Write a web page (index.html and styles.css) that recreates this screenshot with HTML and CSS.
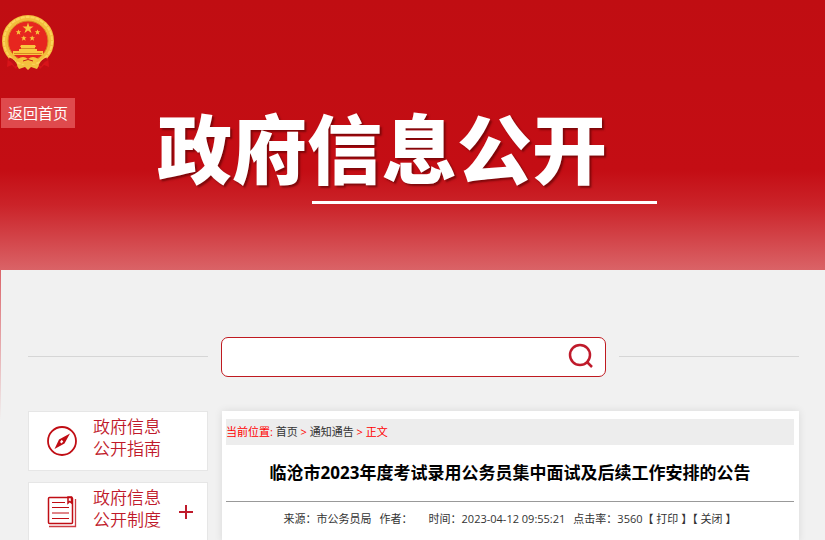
FILE: index.html
```html
<!DOCTYPE html>
<html lang="zh-CN">
<head>
  <meta charset="UTF-8">
  <meta name="viewport" content="width=device-width, initial-scale=1.0">
  <title>政府信息公开</title>
  <link rel="stylesheet" href="styles.css">
</head>
<body>

  <header class="banner">
    <svg class="emblem" viewBox="0 0 54 58" aria-hidden="true">
      <path d="M7 42 L6 53 L11 51 L15 55 L20 47 L34 47 L39 55 L43 51 L48 53 L47 42Z" fill="#d8141a"/>
      <circle cx="27" cy="27" r="23" fill="#e7261f" stroke="#f3bd3c" stroke-width="6"/>
      <circle cx="27" cy="27" r="24" fill="none" stroke="#fbd45c" stroke-width="2" stroke-dasharray="4 1"/>
      <circle cx="27" cy="27" r="20" fill="none" stroke="#dc8d25" stroke-width="1"/>
      <g fill="#f9c63f">
        <path d="M27 8.500 L28.300 12.500 L32.500 12.500 L29.200 15 L30.500 19 L27 16.600 L23.500 19 L24.800 15 L21.500 12.500 L25.700 12.500Z"/>
        <path d="M17.500 15.500l.8 1.800h2l-1.600 1.300.6 2.100-1.800-1.200-1.800 1.200.6-2.100-1.600-1.300h2z"/>
        <path d="M36.500 15.500l.8 1.800h2l-1.600 1.300.6 2.100-1.800-1.200-1.800 1.200.6-2.100-1.600-1.300h2z"/>
        <path d="M22.800 21.500l.8 1.800h2l-1.600 1.300.6 2.100-1.800-1.200-1.800 1.200.6-2.100-1.600-1.300h2z"/>
        <path d="M31.200 21.500l.8 1.800h2l-1.600 1.300.6 2.100-1.800-1.200-1.800 1.200.6-2.100-1.600-1.300h2z"/>
        <path d="M20 31h14l1 2h-1v2h2v2h6v4H12v-4h6v-2h2v-2h-1z"/>
      </g>
      <path d="M13 39.500h28M20 34.500h14" stroke="#d98724" stroke-width="1"/>
      <path d="M17 45 Q22 41 27 45 Q32 41 37 45 L34 50 Q27 47 20 50Z" fill="#f6c23c"/>
      <path d="M22 47 Q27 44 32 47" fill="none" stroke="#c42018" stroke-width="1"/>
      <path d="M15 50 L22 51 Q27 47 32 51 L39 50 L36 55 L30 53 L27 56 L24 53 L18 55Z" fill="#f2c140"/>
      <path d="M8 45 Q13 47 15 52 M46 45 Q41 47 39 52" fill="none" stroke="#c01015" stroke-width="3"/>
    </svg>
    <a class="back-home" href="#">返回首页</a>
    <h1 class="banner-title">政府信息公开</h1>
    <div class="banner-line"></div>
  </header>

  <div class="page">
    <form class="search">
      <span class="search-rule"></span>
      <div class="search-box">
        <input class="search-input" type="text" aria-label="搜索">
        <button class="search-button" type="button" aria-label="搜索">
          <svg viewBox="0 0 26 26" width="26" height="26" fill="none" stroke="#bf1a2b">
            <circle cx="12" cy="12" r="10" stroke-width="2.500"/>
            <path d="M18.500 18.500L24 24" stroke-width="2.500"/>
          </svg>
        </button>
      </div>
      <span class="search-rule"></span>
    </form>

    <div class="columns">
      <nav class="sidebar">
        <a class="side-link" href="#">
          <svg class="side-icon" viewBox="0 0 30 30">
            <circle cx="15" cy="15" r="14" fill="none" stroke="#c00d14" stroke-width="1.800"/>
            <path fill-rule="evenodd" fill="#c00d14" d="M23 7.500 L17.500 17.500 L7.500 23 L12 13.500Z M14.700 13.800 L13 16 L14.500 17.500 L16.300 15.500Z"/>
          </svg>
          <span class="side-text">政府信息<br>公开指南</span>
        </a>
        <a class="side-link" href="#">
          <svg class="side-icon" viewBox="0 0 30 34" fill="none" stroke="#c00d14">
            <rect x="1.500" y="2.500" width="24" height="26" rx="1" stroke-width="1.500"/>
            <path d="M28.500 4V31.500H2" stroke-width="1.300" opacity=".8"/>
            <path d="M5 7.500H18M5 12.500H22M5 18H22M5 23.500H22" stroke-width="1"/>
            <path d="M21 2H24.500V8L22.700 6.500L21 8Z" stroke-width="1.500"/>
          </svg>
          <span class="side-text">政府信息<br>公开制度</span>
          <svg class="side-plus" viewBox="0 0 14 14" stroke="#bf1a2b" stroke-width="2">
            <path d="M0 7H14M7 0V14"/>
          </svg>
        </a>
      </nav>

      <main class="article">
        <div class="crumbs">当前位置: <a href="#">首页</a> &gt; <a href="#">通知通告</a> &gt; 正文</div>
        <h2 class="article-title">临沧市2023年度考试录用公务员集中面试及后续工作安排的公告</h2>
        <div class="meta">
          <span>来源：市公务员局</span>
          <span class="author">作者：</span>
          <span>时间：2023-04-12 09:55:21</span>
          <span>点击率：3560【 <a href="#">打印</a> 】【 <a href="#">关闭</a> 】</span>
        </div>
      </main>
    </div>
  </div>

</body>
</html>
```
FILE: styles.css
```css
* {
  box-sizing: border-box;
}
body {
  margin: 0;
  padding-left: 1px;
  font-family: "Open Sans", "Noto Sans CJK SC", sans-serif;
  font-size: 11px;
  color: #333;
  background: linear-gradient(#c00d12 0, #c40d14 170px, #d9595f 260px, #f1f1f1 420px) no-repeat #f1f1f1;
}
a {
  color: inherit;
  text-decoration: none;
}
.banner {
  display: flex;
  flex-direction: column;
  align-items: flex-start;
  height: 270px;
  padding-top: 14px;
  margin-left: -1px;
  padding-left: 1px;
  background: linear-gradient(#c00d12 0, #c40d14 170px, #cb2329 205px, #da6367 270px);
}
.emblem {
  width: 54px;
  height: 58px;
}
.back-home {
  margin-top: 26px;
  padding: 0 7px;
  font-family: "Noto Sans CJK SC", sans-serif;
  font-size: 15px;
  line-height: 30px;
  color: #fff;
  background-color: #df4a4d;
}
.banner-title {
  margin: -27px 0 0 156px;
  font-family: "Noto Sans CJK SC", sans-serif;
  font-size: 75px;
  font-weight: 900;
  line-height: 90px;
  color: #fff;
  text-shadow: 2px 2px 2px rgba(80, 0, 0, 0.6);
}
.banner-line {
  width: 345px;
  height: 3px;
  margin: 10px 0 0 311px;
  background-color: #fff;
}
.page {
  min-height: 270px;
  padding: 67px 26px 0 27px;
  background-color: #f1f1f1;
}
.search {
  display: flex;
  align-items: center;
  gap: 13px;
}
.search-rule {
  width: 180px;
  height: 2px;
  border-top: 1px solid #d6d6d6;
}
.search-box {
  display: flex;
  flex: 1;
  align-items: center;
  height: 40px;
  padding: 0 11px 2px 0;
  border: 1px solid #bf1a20;
  border-radius: 7px;
  background-color: #fff;
}
.search-input {
  flex: 1;
  min-width: 0;
  height: 36px;
  padding: 0 10px;
  border: none;
  outline: none;
  background: none;
  font-size: 16px;
}
.search-button {
  display: flex;
  padding: 0;
  border: none;
  background: none;
  cursor: pointer;
}
.columns {
  display: grid;
  grid-template-columns: 180px 1fr;
  gap: 14px;
  margin-top: 34px;
}
.sidebar {
  display: flex;
  flex-direction: column;
  gap: 11px;
}
.side-link {
  display: flex;
  align-items: center;
  height: 60px;
  padding: 0 14px 0 18px;
  border: 1px solid #e6e6e6;
  background-color: #fff;
  color: #bf1a2b;
}
.side-icon {
  width: 30px;
}
.side-text {
  margin: 0 auto 4px 16px;
  font-family: "Liberation Sans", "Noto Sans CJK SC", sans-serif;
  font-size: 17px;
  font-weight: 350;
  line-height: 22px;
}
.side-plus {
  width: 14px;
  height: 14px;
}
.article {
  padding: 8px 5px 0 4px;
  background-color: #fff;
  box-shadow: 0 0 8px rgba(0, 0, 0, 0.1);
}
.crumbs {
  height: 26px;
  line-height: 26px;
  color: #f00;
  background-color: #ededed;
}
.crumbs a {
  color: #333;
}
.article-title {
  margin: 0;
  border-bottom: 1px solid #999;
  font-size: 17px;
  line-height: 56px;
  color: #000;
  text-align: center;
}
.meta {
  display: flex;
  justify-content: center;
  gap: 8px;
  line-height: 34px;
}
.author {
  margin-right: 8px;
}
```
